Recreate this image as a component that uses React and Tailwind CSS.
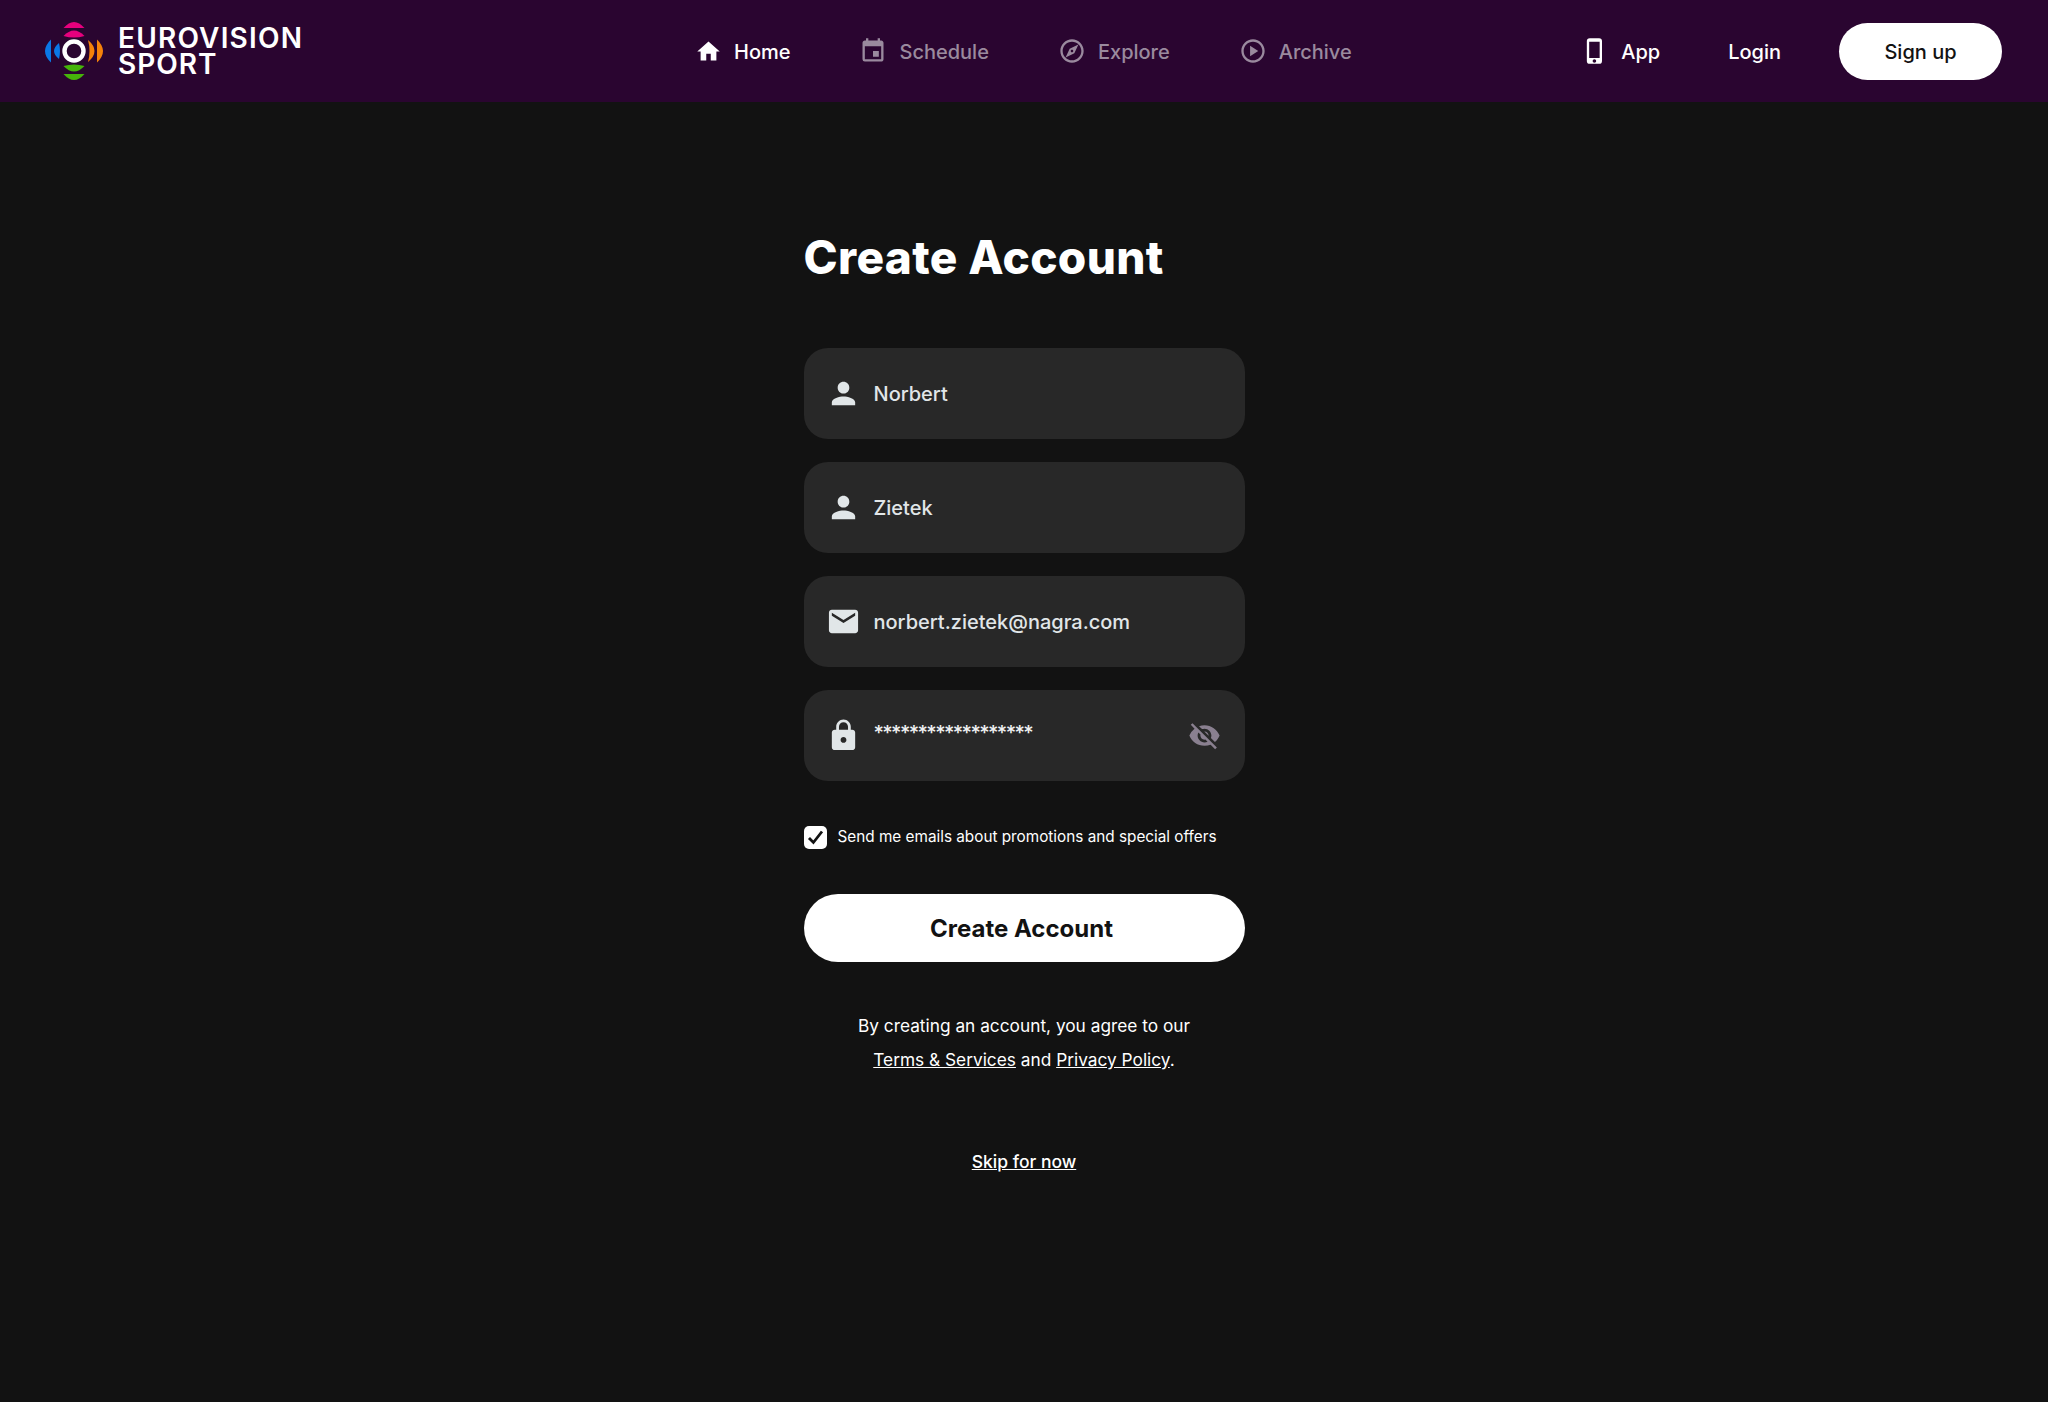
import {
  MdHome,
  MdEvent,
  MdOutlineExplore,
  MdOutlinePlayCircle,
  MdPhoneIphone,
  MdPerson,
  MdEmail,
  MdLock,
  MdVisibilityOff,
} from 'react-icons/md'

const navItems = [
  { label: 'Home', icon: MdHome, active: true, iconClass: 'text-[27px]' },
  { label: 'Schedule', icon: MdEvent, iconClass: 'text-[28px]' },
  { label: 'Explore', icon: MdOutlineExplore, iconClass: 'text-[28px]' },
  { label: 'Archive', icon: MdOutlinePlayCircle, iconClass: 'text-[28px]' },
]

function Logo() {
  return (
    <div className="flex items-center gap-[14px]">
      <svg width="60" height="60" viewBox="-30 -30 60 60" className="shrink-0">
        <path d="M-10.5 -23 Q0 -35 10.5 -23 Z" fill="#e6007e" />
        <path d="M-10.5 -15 Q0 -26 10.5 -15 Q0 -12 -10.5 -15 Z" fill="#e6007e" />
        <path d="M-23 -11.5 Q-35 0 -23 11.5 Z" fill="#0a78e6" />
        <path d="M-15 -8 Q-25 0 -15 8 Q-13 0 -15 -8 Z" fill="#0a78e6" />
        <path d="M23 -11.5 Q35 0 23 11.5 Z" fill="#f5820a" />
        <path d="M14 -11 Q27 0 14 11 Q17 0 14 -11 Z" fill="#f5820a" />
        <path d="M-10.5 15 Q0 12 10.5 15 Q0 26 -10.5 15 Z" fill="#46b40a" />
        <path d="M-10.5 23 Q0 35 10.5 23 Z" fill="#46b40a" />
        <circle cx="0" cy="0" r="9.5" fill="none" stroke="#fff" strokeWidth="4.4" />
      </svg>
      <div className="flex w-[190px] flex-col font-['Inter',sans-serif] text-[28px] font-semibold leading-[26px] text-white">
        <span className="tracking-[1.2px]">EUROVISION</span>
        <span className="tracking-[1px]">SPORT</span>
      </div>
    </div>
  )
}

function Field({ icon: Icon, iconClass, children, right }) {
  return (
    <div className="flex h-[91px] items-center rounded-[24px] bg-[#282828] pl-[25px] pr-[24px]">
      <span className="flex w-[30px] shrink-0 justify-center text-[#e1e6e8]">
        <Icon className={`shrink-0 ${iconClass}`} />
      </span>
      <span className="ml-[15px] flex-1 pt-[1px] text-[20px] font-medium text-[#e1e6e8]">
        {children}
      </span>
      {right}
    </div>
  )
}

export default function App() {
  return (
    <div className="min-h-[1402px] bg-[#121212] font-['Inter',sans-serif] text-white">
      <header className="flex h-[102px] items-center bg-[#2a0530] pl-[44px] pr-[46px]">
        <Logo />
        <nav className="ml-[387px] flex items-center gap-[69px]">
          {navItems.map((item) => {
            const Icon = item.icon
            return (
              <a
                key={item.label}
                className={`flex items-center gap-[12px] text-[20px] font-medium ${
                  item.active ? 'text-white' : 'text-[#9a8a9e]'
                }`}
              >
                <Icon className={`shrink-0 ${item.iconClass}`} />
                <span className="pt-[1px]">{item.label}</span>
              </a>
            )
          })}
        </nav>
        <div className="ml-auto flex items-center text-[20px] font-medium">
          <a className="flex items-center gap-[12px]">
            <MdPhoneIphone className="shrink-0 text-[28px]" />
            <span className="pt-[1px]">App</span>
          </a>
          <a className="ml-[68px] pt-[1px]">Login</a>
          <button
            type="button"
            className="ml-[58px] h-[57px] w-[163px] rounded-full bg-white pt-[1px] text-[#121212]"
          >
            Sign up
          </button>
        </div>
      </header>

      <main className="mx-auto flex w-[441px] flex-col pt-[127px]">
        <h1 className="text-[46px] leading-[56px] font-extrabold tracking-[0.35px]">Create Account</h1>

        <div className="mt-[63px] flex flex-col gap-[23px]">
          <Field icon={MdPerson} iconClass="text-[35px]">Norbert</Field>
          <Field icon={MdPerson} iconClass="text-[35px]">Zietek</Field>
          <Field icon={MdEmail} iconClass="text-[35px]">norbert.zietek@nagra.com</Field>
          <Field
            icon={MdLock}
            iconClass="text-[35px]"
            right={<MdVisibilityOff className="shrink-0 text-[33px] text-[#8a8090]" />}
          >
            <span className="relative -top-[3px] tracking-[-1.6px] text-[#f0f2f3]">******************</span>
          </Field>
        </div>

        <label className="mt-[45px] flex items-center gap-[11px]">
          <span className="flex h-[23px] w-[23px] items-center justify-center rounded-[5px] bg-white">
            <svg width="17" height="17" viewBox="0 0 17 17" fill="none" stroke="#121212" strokeWidth="2.8">
              <path d="M2 9 L6.4 13.5 L15 2.5" />
            </svg>
          </span>
          <span className="text-[15.3px]">Send me emails about promotions and special offers</span>
        </label>

        <button
          type="button"
          className="mt-[45px] h-[68px] w-full rounded-full bg-white pt-[1px] pr-[5px] text-[24px] font-bold text-[#121212]"
        >
          Create Account
        </button>

        <div className="mt-[47px] text-center text-[17.3px] leading-[34px]">
          <p>By creating an account, you agree to our</p>
          <p>
            <a className="underline">Terms &amp; Services</a> and <a className="underline">Privacy Policy</a>.
          </p>
        </div>

        <a className="mt-[72px] self-center text-[17.5px] font-medium underline">Skip for now</a>
      </main>
    </div>
  )
}
